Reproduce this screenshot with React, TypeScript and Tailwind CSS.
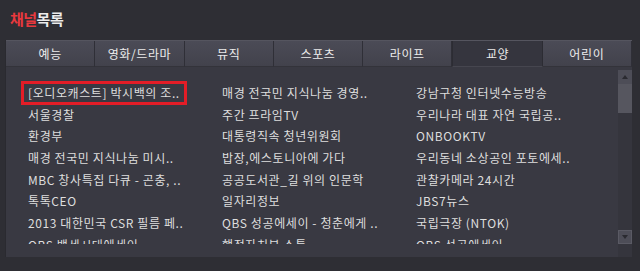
import React from 'react';

const tabs = ['예능', '영화/드라마', '뮤직', '스포츠', '라이프', '교양', '어린이'];

const channels: string[] = [
  '[오디오캐스트] 박시백의 조..', '매경 전국민 지식나눔 경영..', '강남구청 인터넷수능방송',
  '서울경찰', '주간 프라임TV', '우리나라 대표 자연 국립공..',
  '환경부', '대통령직속 청년위원회', 'ONBOOKTV',
  '매경 전국민 지식나눔 미시..', '밥장,에스토니아에 가다', '우리동네 소상공인 포토에세..',
  'MBC 창사특집 다큐 - 곤충, ..', '공공도서관_길 위의 인문학', '관찰카메라 24시간',
  '톡톡CEO', '일자리정보', 'JBS7뉴스',
  '2013 대한민국 CSR 필름 페..', 'QBS 성공에세이 - 청춘에게 ..', '국립극장 (NTOK)',
  'QBS 백세시대에세이', '행정자치부 소통', 'QBS 성공에세이',
];

const App: React.FC = () => {
  const active = '교양';
  const selected = 0;

  return (
    <div
      className="w-[640px] h-[271px] overflow-hidden bg-[#2e2e34] text-[#dedede]"
      style={{ fontFamily: '"Noto Sans CJK KR", "Noto Sans", sans-serif' }}
    >
      {/* header */}
      <div className="h-[40px] pl-[10px] pt-[9px]">
        <h2 className="text-[15px] font-bold leading-[20px] tracking-[-0.5px]">
          <span className="text-[#e8393e]">채널</span>
          <span className="text-[#ececec]">목록</span>
        </h2>
      </div>

      {/* panel */}
      <div className="ml-[5px] w-[627px] h-[217px] bg-[#393942] border-l border-[#2a2a30] flex flex-col">
        <div className="flex h-[27px] border-t border-[#55555f]">
          {tabs.map((t) => (
            <div
              key={t}
              className={
                t === active
                  ? 'flex-1 flex items-center justify-center text-[12px] tracking-[0.6px] bg-[#35353e] border-r border-[#2c2c33] border-l border-[#2c2c33] border-b border-b-[#46464f] text-[#ececec]'
                  : 'flex-1 flex items-center justify-center text-[12px] tracking-[0.6px] bg-gradient-to-b from-[#4b4b56] to-[#42424c] border-r border-[#2f2f37] border-b border-b-[#33333a] text-[#ececec]'
              }
            >
              {t}
            </div>
          ))}
        </div>

        <div className="flex flex-1 pt-[3px]">
          <div className="flex-1 h-[174px] overflow-hidden pt-[12px] pl-[15px]">
            <div className="grid grid-cols-[194px_194px_194px]">
              {channels.map((c, i) => (
                <div key={i} className="h-[21.7px] flex items-center">
                  <span
                    className={
                      i === selected
                        ? 'inline-block h-[24px] leading-[18px] px-[4px] border-[3px] border-[#e31d27] text-[12px] tracking-[0.6px] whitespace-nowrap'
                        : 'inline-block h-[24px] leading-[18px] px-[4px] border-[3px] border-transparent text-[12px] tracking-[0.6px] whitespace-nowrap'
                    }
                  >
                    {c}
                  </span>
                </div>
              ))}
            </div>
          </div>

          {/* scrollbar */}
          <div className="w-[14px] flex flex-col bg-[#35353d]">
            <div className="h-[174px] flex flex-col">
              <div className="h-[14px] bg-[#4d4d57] flex items-center justify-center">
                <svg width="6" height="4" viewBox="0 0 6 4">
                  <path d="M3 0 L6 4 L0 4 Z" fill="#2a2a30" />
                </svg>
              </div>
              <div className="h-[29px] bg-[#56565f]" />
              <div className="flex-1" />
              <div className="h-[14px] bg-[#4d4d57] flex items-center justify-center border border-[#5a5a64]">
                <svg width="6" height="4" viewBox="0 0 6 4">
                  <path d="M0 0 L6 0 L3 4 Z" fill="#2a2a30" />
                </svg>
              </div>
            </div>
          </div>
        </div>
      </div>
    </div>
  );
};

export default App;
